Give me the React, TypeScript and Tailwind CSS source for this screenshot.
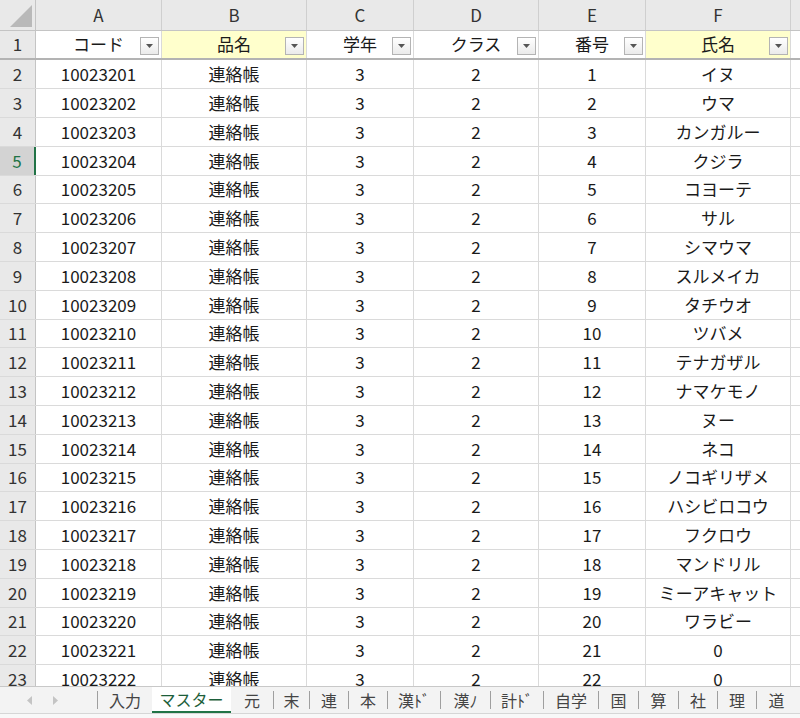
import React from 'react'

const NAMES = [
  'イヌ', 'ウマ', 'カンガルー', 'クジラ', 'コヨーテ', 'サル', 'シマウマ', 'スルメイカ', 'タチウオ', 'ツバメ',
  'テナガザル', 'ナマケモノ', 'ヌー', 'ネコ', 'ノコギリザメ', 'ハシビロコウ', 'フクロウ', 'マンドリル',
  'ミーアキャット', 'ワラビー', '0', '0', '0',
]

// column widths incl. the 1px right gridline
const COLS = ['w-[126px]', 'w-[145px]', 'w-[107px]', 'w-[125px]', 'w-[107px]', 'w-[145px]']
const LETTERS = ['A', 'B', 'C', 'D', 'E', 'F']
const HEADERS = ['コード', '品名', '学年', 'クラス', '番号', '氏名']

const TABS = [
  { label: '入力', w: 'w-[54px]' },
  { label: 'マスター', w: 'w-[79px]', active: true },
  { label: '元', w: 'w-[42px]' },
  { label: '末', w: 'w-[35px]' },
  { label: '連', w: 'w-[38px]' },
  { label: '本', w: 'w-[38px]' },
  { label: '漢ﾄﾞ', w: 'w-[52px]' },
  { label: '漢ﾉ', w: 'w-[49px]' },
  { label: '計ﾄﾞ', w: 'w-[52px]' },
  { label: '自学', w: 'w-[54px]' },
  { label: '国', w: 'w-[39px]' },
  { label: '算', w: 'w-[39px]' },
  { label: '社', w: 'w-[38px]' },
  { label: '理', w: 'w-[38px]' },
  { label: '道', w: 'w-[39px]' },
]

function FilterButton() {
  return (
    <div className="absolute right-[2px] top-[6px] w-[19px] h-[18px] border border-[#b4b4b4] bg-gradient-to-b from-white to-[#ebebeb] flex items-center justify-center">
      <svg width="7" height="4" viewBox="0 0 7 4">
        <polygon points="0,0 7,0 3.5,4" fill="#555" />
      </svg>
    </div>
  )
}

export default function App() {
  return (
    <div className="w-[800px] h-[718px] overflow-hidden bg-white font-['Noto_Sans_CJK_JP','Liberation_Sans',sans-serif] text-[17px] leading-none text-[#1a1a1a]">
      <div className="h-[686px] overflow-hidden">
        {/* column letters */}
        <div className="flex h-[31px] bg-[#e9e9e9] border-b border-[#c4c4c4]">
          <div className="w-[36px] shrink-0 border-r border-[#c4c4c4] flex items-end justify-end pr-[3px] pb-[3px]">
            <svg width="22" height="22" viewBox="0 0 22 22">
              <polygon points="0,22 22,22 22,0" fill="#b9b9b9" />
            </svg>
          </div>
          {LETTERS.map((l, i) => (
            <div key={l} className={`${COLS[i]} shrink-0 border-r border-[#cfcfcf] flex items-center justify-center pb-[2px] text-[#333]`}>
              {l}
            </div>
          ))}
          <div className="flex-1" />
        </div>

        {/* row 1 – filter header */}
        <div className="flex h-[29px] border-b-2 border-[#b3b3b3]">
          <div className="w-[36px] shrink-0 bg-[#e9e9e9] border-r border-[#c4c4c4] flex items-center justify-center pb-[2px] text-[#333]">
            1
          </div>
          {HEADERS.map((h, i) => (
            <div
              key={h}
              className={`${COLS[i]} shrink-0 relative border-r border-[#dadada] flex items-center justify-center pb-[2px] ${i === 1 || i === 5 ? 'bg-[#ffffcc]' : 'bg-white'}`}
            >
              {h}
              <FilterButton />
            </div>
          ))}
          <div className="flex-1" />
        </div>

        {/* data rows */}
        {NAMES.map((name, i) => {
          const rowNo = i + 2
          const selected = rowNo === 5
          const values = [
            String(10023201 + i),
            '連絡帳',
            '3',
            '2',
            String(i + 1),
            name,
          ]
          return (
            <div key={rowNo} className={`flex border-b border-[#dadada] ${i % 5 === 4 ? 'h-[28px]' : 'h-[29px]'}`}>
              <div
                className={`w-[36px] shrink-0 flex items-center justify-center pb-[2px] ${
                  selected
                    ? 'bg-[#d3d3d3] border-r-2 border-[#217346] text-[#217346]'
                    : 'bg-[#e9e9e9] border-r border-[#c4c4c4] text-[#333]'
                }`}
              >
                {rowNo}
              </div>
              {values.map((v, j) => (
                <div key={j} className={`${COLS[j]} shrink-0 border-r border-[#dadada] flex items-center justify-center pb-[2px]`}>
                  {v}
                </div>
              ))}
              <div className="flex-1" />
            </div>
          )
        })}
      </div>

      {/* sheet tabs */}
      <div className="flex h-[27px] bg-[#f3f3f3] border-t border-[#c8c8c8] text-[16px] text-[#444]">
        <div className="w-[97px] shrink-0 flex items-center pl-[27px] gap-[21px]">
          <svg width="5" height="9" viewBox="0 0 5 9">
            <polygon points="5,0 5,9 0,4.5" fill="#c4c4c4" />
          </svg>
          <svg width="5" height="9" viewBox="0 0 5 9">
            <polygon points="0,0 0,9 5,4.5" fill="#c4c4c4" />
          </svg>
        </div>
        {TABS.map((t, i) => {
          const prevActive = i > 0 && TABS[i - 1].active
          const showSep = !t.active && !prevActive
          return (
            <React.Fragment key={t.label}>
              {showSep ? (
                <span className="w-px h-[18px] self-center bg-[#9f9f9f] shrink-0" />
              ) : null}
              <div
                className={`${t.w} shrink-0 flex items-center justify-center ${
                  t.active ? 'bg-white border-b-2 border-[#217346] text-[#1d5e3a]' : ''
                }`}
              >
                {t.label}
              </div>
            </React.Fragment>
          )
        })}
      </div>
      <div className="h-[5px] bg-[#f8f8f8] border-t border-[#d6d6d6]" />
    </div>
  )
}
